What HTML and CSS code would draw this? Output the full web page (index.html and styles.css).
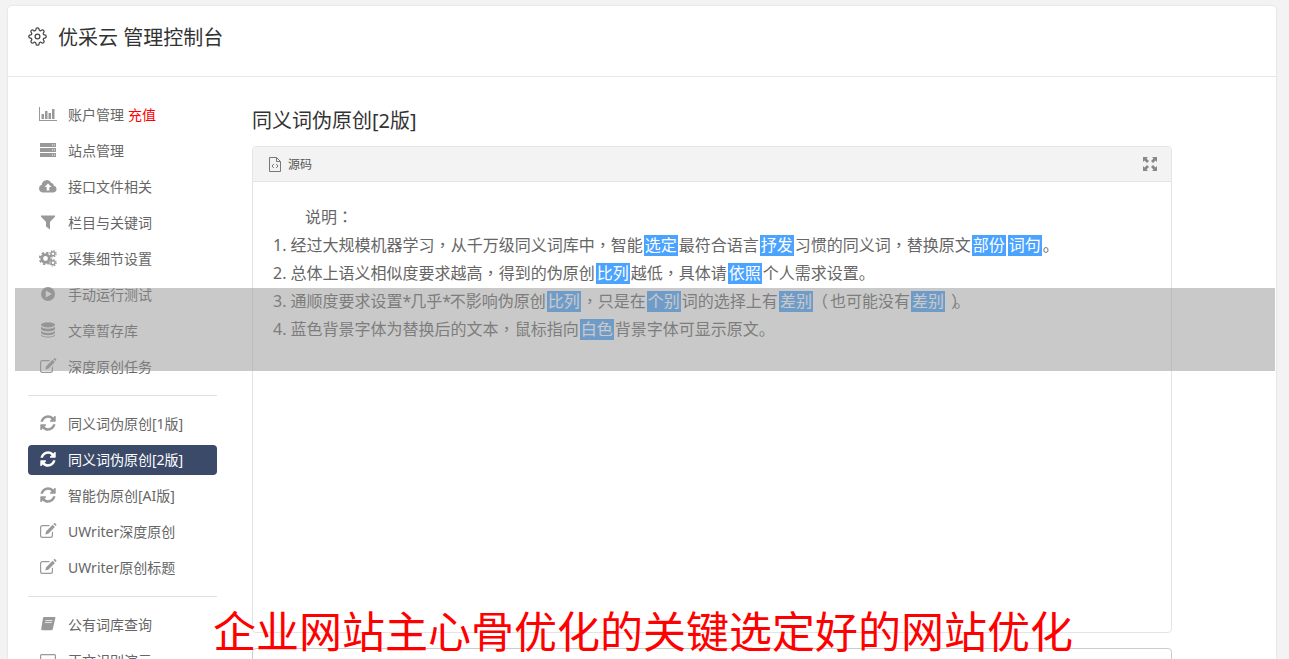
FILE: index.html
```html
<!doctype html>
<html>
  <head>
    <title>优采云 管理控制台</title>
    <meta charset="utf-8" />
    <link rel="stylesheet" href="styles.css">
  </head>
  <body>
    <svg class="sprite" xmlns="http://www.w3.org/2000/svg">
      <symbol id="i-bars" viewBox="0 0 18 18">
        <path d="M0 2h1v13h18v1H0z"/><path d="M2.500 9h2.500v5H2.500zM6 6h2.500v8H6zM9.500 8h2.500v6H9.500zM13 4h2.500v10H13z"/>
      </symbol>
      <symbol id="i-server" viewBox="0 0 18 18">
        <path d="M1 2h16v4H1zM1 7h16v4H1zM1 12h16v4H1z"/>
        <path fill="#fff" d="M13 3.500h1v1h-1zM15 3.500h1v1h-1zM13 8.500h1v1h-1zM15 8.500h1v1h-1zM13 13.500h1v1h-1zM15 13.500h1v1h-1z"/>
      </symbol>
      <symbol id="i-cloud" viewBox="0 0 18 18">
        <path d="M4 15.500a4 4 0 0 1-1.200-7.800A5 5 0 0 1 12.300 6a3 3 0 0 1 2.600 2.800A3.400 3.400 0 0 1 14.500 15.500z"/>
        <path fill="#fff" d="M9 6.500l3.500 3.500h-2.200v3.500H7.700V10H5.500z"/>
      </symbol>
      <symbol id="i-filter" viewBox="0 0 18 18">
        <path d="M2 2.500h14v1.200l-5 5.300v7.500l-4-3V9L2 3.700z"/>
      </symbol>
      <symbol id="i-cogs" viewBox="0 0 18 18">
        <circle cx="6.500" cy="9.500" r="3.800" fill="none" stroke-width="2.800" stroke="#999"/>
        <circle cx="6.500" cy="9.500" r="5.800" fill="none" stroke-width="1.800" stroke="#999" stroke-dasharray="2.400 2.150"/>
        <circle cx="14" cy="4.800" r="2" fill="none" stroke-width="1.400" stroke="#999"/>
        <circle cx="14" cy="4.800" r="3.200" fill="none" stroke-width="1.100" stroke="#999" stroke-dasharray="1.300 1.210"/>
        <circle cx="14" cy="13.800" r="2" fill="none" stroke-width="1.400" stroke="#999"/>
        <circle cx="14" cy="13.800" r="3.200" fill="none" stroke-width="1.100" stroke="#999" stroke-dasharray="1.300 1.210"/>
      </symbol>
      <symbol id="i-play" viewBox="0 0 18 18">
        <path fill-rule="evenodd" d="M9 2a7 7 0 1 1 0 14A7 7 0 0 1 9 2zM6.800 5.500v7L12.800 9z"/>
      </symbol>
      <symbol id="i-db" viewBox="0 0 18 18">
        <ellipse cx="9" cy="3.800" rx="7" ry="2.600"/>
        <path d="M2 5.500c1 1.700 4 2.200 7 2.200s6-.5 7-2.200v2.800c-1 1.700-4 2.200-7 2.200s-6-.5-7-2.200z"/>
        <path d="M2 9.700c1 1.700 4 2.200 7 2.200s6-.5 7-2.200v2.400c-1 1.700-4 2.200-7 2.200s-6-.5-7-2.200z"/>
        <path d="M2 13.500c1 1.700 4 2.100 7 2.100s6-.4 7-2.100v1c-.8 1.500-4 2-7 2s-6.200-.5-7-2z"/>
      </symbol>
      <symbol id="i-edit" viewBox="0 0 18 18">
        <path d="M3.500 3H11L9.800 4.200H3.500A1.300 1.300 0 0 0 2.200 5.500v8a1.300 1.300 0 0 0 1.300 1.300h8a1.300 1.300 0 0 0 1.300-1.300v-3l1.200-1.200v4.200a2.500 2.500 0 0 1-2.500 2.500h-8A2.500 2.500 0 0 1 1 13.500v-8A2.500 2.500 0 0 1 3.500 3z"/>
        <path d="M13.600 2.700l2.300 2.300-6.600 6.700-3 .7.700-3zM14.400 1.900l.7-.6c.3-.3.800-.3 1.100 0l1 1c.3.300.3.800 0 1.100l-.6.700z"/>
      </symbol>
      <symbol id="i-sync" viewBox="0 0 1792 1792">
        <path d="M1639 1056q0 5-1 7-64 268-268 434.500t-478 166.500q-146 0-282.500-55t-243.500-157l-129 129q-19 19-45 19t-45-19-19-45v-448q0-26 19-45t45-19h448q26 0 45 19t19 45-19 45l-137 137q71 66 161 102t187 36q134 0 250-65t186-179q11-17 53-117 8-23 30-23h192q13 0 22.500 9.500t9.500 22.500zm25-800v448q0 26-19 45t-45 19h-448q-26 0-45-19t-19-45 19-45l138-138q-148-137-349-137-134 0-250 65t-186 179q-11 17-53 117-8 23-30 23h-199q-13 0-22.500-9.500t-9.500-22.500v-7q65-268 270-434.500t480-166.500q146 0 284 55.500t245 156.500l130-129q19-19 45-19t45 19 19 45z"/>
      </symbol>
      <symbol id="i-book" viewBox="0 0 18 18">
        <path d="M5 2h10.500c.8 0 1 .5.800 1.200L13.800 14c-.2.800-.7 1.200-1.500 1.200H3.500c-1 0-1.500-1-1.200-2L4 3c.1-.6.500-1 1-1z"/>
        <path fill="#fff" d="M6.500 5h7l-.2.800h-7zM6 7h7l-.2.800h-7z"/>
      </symbol>
      <symbol id="i-screen" viewBox="0 0 18 18">
        <path fill-rule="evenodd" d="M2.500 3h13A1.500 1.500 0 0 1 17 4.500v9a1.500 1.500 0 0 1-1.500 1.500h-13A1.500 1.500 0 0 1 1 13.500v-9A1.500 1.500 0 0 1 2.500 3zm0 1.200a.3.300 0 0 0-.3.300v9c0 .2.100.3.300.3h13c.2 0 .3-.1.300-.3v-9a.3.300 0 0 0-.3-.3z"/>
      </symbol>
    </svg>

    <div class="card">
      <div class="card-head">
        <svg class="gear" viewBox="0 0 24 24"><circle cx="12" cy="12" r="3"/><path d="M19.400 15a1.650 1.650 0 0 0 .33 1.820l.06.06a2 2 0 0 1 0 2.830 2 2 0 0 1-2.830 0l-.06-.06a1.650 1.650 0 0 0-1.820-.33 1.650 1.650 0 0 0-1 1.510V21a2 2 0 0 1-2 2 2 2 0 0 1-2-2v-.09A1.650 1.650 0 0 0 9 19.400a1.650 1.650 0 0 0-1.820.33l-.06.06a2 2 0 0 1-2.830 0 2 2 0 0 1 0-2.830l.06-.06a1.650 1.650 0 0 0 .33-1.820 1.650 1.650 0 0 0-1.510-1H3a2 2 0 0 1-2-2 2 2 0 0 1 2-2h.09A1.650 1.650 0 0 0 4.600 9a1.650 1.650 0 0 0-.33-1.820l-.06-.06a2 2 0 0 1 0-2.830 2 2 0 0 1 2.830 0l.06.06a1.650 1.650 0 0 0 1.820.33H9a1.650 1.650 0 0 0 1-1.510V3a2 2 0 0 1 2-2 2 2 0 0 1 2 2v.09a1.650 1.650 0 0 0 1 1.510 1.650 1.650 0 0 0 1.820-.33l.06-.06a2 2 0 0 1 2.830 0 2 2 0 0 1 0 2.830l-.06.06a1.650 1.650 0 0 0-.33 1.820V9a1.650 1.650 0 0 0 1.510 1H21a2 2 0 0 1 2 2 2 2 0 0 1-2 2h-.09a1.650 1.650 0 0 0-1.510 1z"/></svg>
        <span>优采云 管理控制台</span>
      </div>

      <div class="card-body">
        <div class="nav">
          <a class="nav-item"><svg class="nav-icon"><use href="#i-bars"/></svg>账户管理<em class="recharge">充值</em></a>
          <a class="nav-item"><svg class="nav-icon"><use href="#i-server"/></svg>站点管理</a>
          <a class="nav-item"><svg class="nav-icon"><use href="#i-cloud"/></svg>接口文件相关</a>
          <a class="nav-item"><svg class="nav-icon"><use href="#i-filter"/></svg>栏目与关键词</a>
          <a class="nav-item"><svg class="nav-icon"><use href="#i-cogs"/></svg>采集细节设置</a>
          <a class="nav-item"><svg class="nav-icon"><use href="#i-play"/></svg>手动运行测试</a>
          <a class="nav-item"><svg class="nav-icon"><use href="#i-db"/></svg>文章暂存库</a>
          <a class="nav-item"><svg class="nav-icon"><use href="#i-edit"/></svg>深度原创任务</a>
          <div class="nav-rule"></div>
          <a class="nav-item"><svg class="nav-icon"><use href="#i-sync"/></svg>同义词伪原创[1版]</a>
          <a class="nav-item active"><svg class="nav-icon"><use href="#i-sync"/></svg>同义词伪原创[2版]</a>
          <a class="nav-item"><svg class="nav-icon"><use href="#i-sync"/></svg>智能伪原创[AI版]</a>
          <a class="nav-item"><svg class="nav-icon"><use href="#i-edit"/></svg>UWriter深度原创</a>
          <a class="nav-item"><svg class="nav-icon"><use href="#i-edit"/></svg>UWriter原创标题</a>
          <div class="nav-rule"></div>
          <a class="nav-item"><svg class="nav-icon"><use href="#i-book"/></svg>公有词库查询</a>
          <a class="nav-item"><svg class="nav-icon"><use href="#i-screen"/></svg>正文识别演示</a>
        </div>

        <div class="main">
          <h3 class="page-title">同义词伪原创[2版]</h3>
          <div class="panel">
            <div class="panel-head">
              <svg class="file-icon" viewBox="0 0 12 15"><path d="M.5.500h7l4 4v10H.500zM7.500.500v4h4"/><path d="M4.800 7L3 9l1.800 2M7.200 7L9 9l-1.800 2"/></svg>
              <span>源码</span>
              <svg class="expand-icon" viewBox="0 0 14 14"><path d="M0 0h5L3.500 1.500 6 4 4 6 1.500 3.500 0 5zM14 0v5l-1.500-1.500L10 6 8 4l2.500-2.500L9 0zM0 14V9l1.500 1.500L4 8l2 2-2.500 2.500L5 14zM14 14H9l1.500-1.500L8 10l2-2 2.500 2.500L14 9z"/></svg>
            </div>
            <div class="panel-text">
              <p class="intro">说明<i class="mark">：</i></p>
              <p>1. 经过大规模机器学习<i class="mark">，</i>从千万级同义词库中<i class="mark">，</i>智能<span class="swap">选定</span>最符合语言<span class="swap">抒发</span>习惯的同义词<i class="mark">，</i>替换原文<span class="swap">部份</span><span class="swap">词句</span>。</p>
              <p>2. 总体上语义相似度要求越高<i class="mark">，</i>得到的伪原创<span class="swap">比列</span>越低<i class="mark">，</i>具体请<span class="swap">依照</span>个人需求设置。</p>
              <p>3. 通顺度要求设置<i class="star">*</i>几乎<i class="star">*</i>不影响伪原创<span class="swap">比列</span><i class="mark">，</i>只是在<span class="swap">个别</span>词的选择上有<span class="swap">差别</span><i class="mark open">（</i>也可能没有<span class="swap">差别</span><i class="mark close">）</i>。</p>
              <p>4. 蓝色背景字体为替换后的文本<i class="mark">，</i>鼠标指向<span class="swap">白色</span>背景字体可显示原文。</p>
            </div>
          </div>
          <div class="panel-next"></div>
        </div>
      </div>
    </div>

    <div class="veil"></div>
    <div class="watermark">企业网站主心骨优化的关键选定好的网站优化</div>
  </body>
</html>
```

FILE: styles.css
```css
* {
	padding:0;
	margin:0;
	box-sizing:border-box;
}

html, body {
	height:100%;
	overflow:hidden;
}

body {
	padding:6px 13px 0 8px;
	background-color:#f3f3f3;
	font-family:"Noto Sans", "Noto Sans CJK SC", sans-serif;
	color:#666;
}

.sprite {
	display:none;
}

.card {
	height:100%;
	overflow:hidden;
	background-color:#fff;
	border-radius:4px 4px 0 0;
	box-shadow:0 0 2px rgba(0,0,0,0.15);
}

.card-head {
	display:flex;
	align-items:center;
	height:71px;
	padding:0 0 9px 20px;
	border-bottom:1px solid #e7e7e7;
	font-size:20px;
	color:#333;
}

.gear {
	width:19px;
	height:19px;
	margin-right:11px;
	fill:none;
	stroke:#444;
	stroke-width:1.6;
}

.card-body {
	display:flex;
}

.nav {
	width:189px;
	margin-left:20px;
	padding-top:23px;
}

.nav-item {
	display:flex;
	align-items:center;
	height:30px;
	margin-bottom:6px;
	padding:0 0 2px 11px;
	border-radius:4px;
	font-size:14px;
	color:#666;
}

.nav-icon {
	width:18px;
	height:18px;
	margin-right:11px;
	fill:#999;
	flex-shrink:0;
}

.nav-item.active {
	background-color:#3a4a68;
	color:#fff;
}

.nav-item.active .nav-icon {
	fill:#fff;
}

.recharge {
	margin-left:4px;
	font-style:normal;
	color:#f00;
}

.nav-rule {
	height:1px;
	margin:13px 0;
	background-color:#e0e0e0;
}

.main {
	width:920px;
	margin-left:35px;
	padding-top:30px;
}

.page-title {
	height:28px;
	margin-bottom:11px;
	font-size:20px;
	font-weight:normal;
	line-height:28px;
	color:#333;
}

.panel {
	height:487px;
	border:1px solid #e4e4e4;
	border-radius:4px;
}

.panel-head {
	display:flex;
	align-items:center;
	height:35px;
	padding:0 14px 0 16px;
	background-color:#f3f3f3;
	border-bottom:1px solid #e4e4e4;
	border-radius:4px 4px 0 0;
	font-size:12px;
	color:#555;
}

.file-icon {
	width:12px;
	height:15px;
	margin-right:7px;
	fill:none;
	stroke:#777;
}

.expand-icon {
	width:14px;
	height:14px;
	margin-left:auto;
	fill:#888;
}

.panel-text {
	padding:20px 0 0 20px;
	font-size:16px;
	line-height:28px;
}

.panel-text p {
	height:28px;
}

.intro {
	text-indent:32px;
}

.mark {
	font-family:"Noto Sans CJK TC", sans-serif;
	font-style:normal;
}

.mark.open {
	margin-left:-2px;
	padding-right:2px;
}

.mark.close {
	padding-left:5px;
	letter-spacing:-5px;
}

.star {
	font-style:normal;
	letter-spacing:-1.25px;
}

.swap {
	display:inline-block;
	height:21px;
	margin:0 1px;
	padding:0 1px;
	background-color:#4aa3ff;
	color:#fff;
	line-height:21px;
}

.panel-next {
	height:60px;
	margin-top:15px;
	border:1px solid #ccc;
	border-radius:4px;
}

.veil {
	position:absolute;
	left:15px;
	top:288px;
	width:1260px;
	height:83px;
	background-color:rgba(148,148,148,0.5);
}

.watermark {
	position:absolute;
	left:213px;
	top:602px;
	font-size:43px;
	line-height:60px;
	color:#f00;
	white-space:nowrap;
}
```
